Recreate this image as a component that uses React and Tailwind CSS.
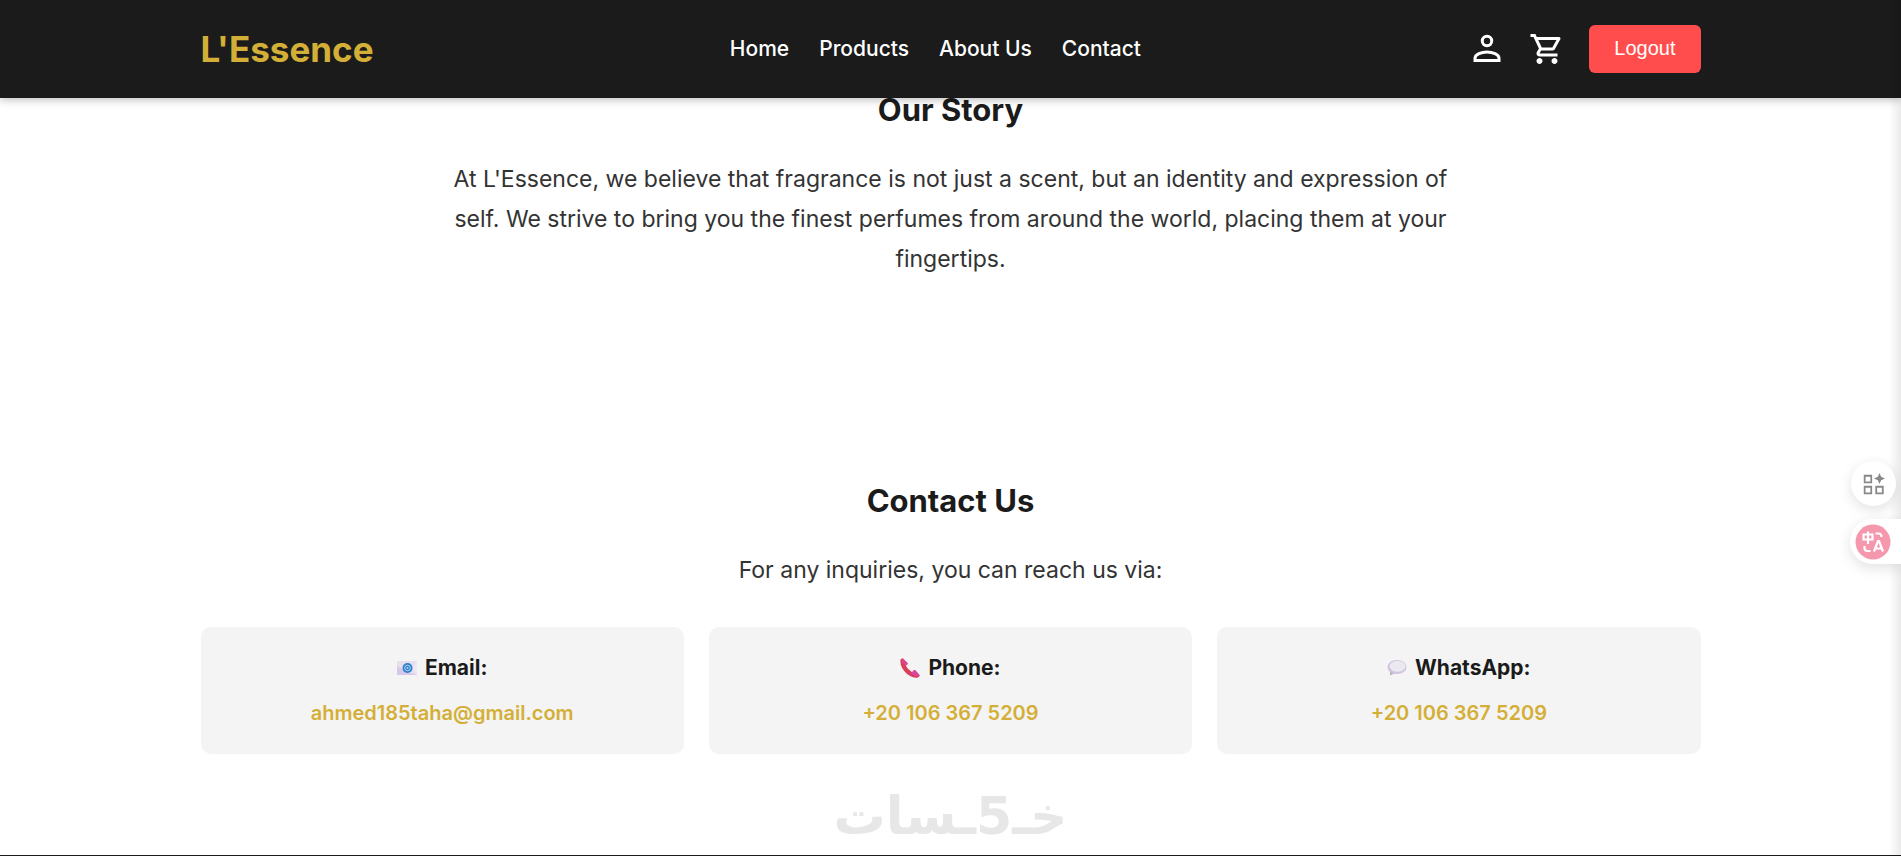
import React from 'react';
import { MdOutlineShoppingCart } from 'react-icons/md';

const navLinks = [
  { label: 'Home', href: '#home' },
  { label: 'Products', href: '#products' },
  { label: 'About Us', href: '#about' },
  { label: 'Contact', href: '#contact' },
];

function PersonIcon() {
  return (
    <svg viewBox="0 0 36 36" className="size-9" fill="none" stroke="currentColor" strokeWidth="3">
      <circle cx="18" cy="10" r="4.700" />
      <path d="M6 29.500v-2.200c0-3.800 6.500-6.300 12-6.300s12 2.500 12 6.300v2.200z" />
    </svg>
  );
}

function EmailEmoji() {
  return (
    <svg viewBox="0 0 20 20" className="size-5" aria-hidden="true">
      <path d="M0 3h20v14H0z" fill="#e6e0ee" />
      <path d="M0 17V8l8 5 12 4z" fill="#d5c8e8" />
      <path d="M20 3v12l-5-4z" fill="#eeeaf3" />
      <circle cx="10.500" cy="10" r="5" fill="#2f7fcb" />
      <circle cx="10.500" cy="10" r="2.800" fill="none" stroke="#b5d7f5" strokeWidth="1" />
      <circle cx="10.500" cy="10" r="1" fill="#b5d7f5" />
    </svg>
  );
}

function PhoneEmoji() {
  return (
    <svg viewBox="0 0 20 20" className="size-5" aria-hidden="true">
      <path d="M0.500 1.500Q1.500 0 3 0.500L7.500 5Q8 6 6.500 7L5.800 7.800Q8 12 12.200 14.200L13.500 12.500Q14.500 11.500 15.500 12.500L19.500 17Q20 18.500 18 19.500Q13 20.500 7 16Q-0.500 9 0.500 1.500Z" fill="#dc3d5b" />
      <path d="M3 0.500L7.500 5Q8 6 6.500 7L5.800 7.800L1.500 3.500Z" fill="#d8489a" />
      <path d="M12.200 14.200L13.500 12.500Q14.500 11.500 15.500 12.500L19.500 17Q20 18 18.500 18.500Q14 18 10.500 15.500Z" fill="#d8489a" />
    </svg>
  );
}

function ChatEmoji() {
  return (
    <svg viewBox="0 0 20 20" className="size-5" aria-hidden="true">
      <path d="M3 12v5.500l6-3z" fill="#b9b1c2" />
      <ellipse cx="10" cy="9" rx="9.500" ry="7" fill="#cfc2e2" />
      <ellipse cx="10.500" cy="8.300" rx="8" ry="5.500" fill="#ebe8ef" />
    </svg>
  );
}

const contacts = [
  { icon: <EmailEmoji />, label: 'Email:', value: 'ahmed185taha@gmail.com', href: 'mailto:ahmed185taha@gmail.com' },
  { icon: <PhoneEmoji />, label: 'Phone:', value: '+20 106 367 5209', href: 'tel:+201063675209' },
  { icon: <ChatEmoji />, label: 'WhatsApp:', value: '+20 106 367 5209', href: 'https://wa.me/201063675209' },
];

function Header() {
  return (
    <header className="sticky top-0 z-10 bg-[#1b1b1b] shadow-[0_2px_8px_rgba(0,0,0,0.25)]">
      <div className="mx-auto flex max-w-[1500px] items-center justify-between py-[25px]">
        <a href="#home" className="text-[35px] leading-10 font-bold text-[#d4af37]">L'Essence</a>
        <nav className="flex gap-[30px] pl-7 text-[21px] font-medium text-white">
          {navLinks.map((link) => (
            <a key={link.label} href={link.href}>{link.label}</a>
          ))}
        </nav>
        <div className="flex items-center gap-6 text-white">
          <a href="#profile" aria-label="Profile"><PersonIcon /></a>
          <a href="#cart" aria-label="Cart"><MdOutlineShoppingCart className="size-9" /></a>
          <button className="h-12 rounded-md bg-[#ff4d4d] px-[25px] pb-[2px] font-['Liberation_Sans',sans-serif] text-xl">
            Logout
          </button>
        </div>
      </div>
    </header>
  );
}

function FloatingTools() {
  return (
    <div className="fixed right-0 top-[461px] z-20 flex flex-col items-end gap-[13px]">
      <button aria-label="Tools" className="mr-[5px] flex size-[45px] items-center justify-center rounded-full bg-white shadow-[0_4px_14px_rgba(0,0,0,0.12)]">
        <svg viewBox="0 0 20 20" className="size-[22px]" fill="none" stroke="#888888" strokeWidth="1.600">
          <path d="M1.500 2.500h6v6h-6zM1.500 12.500h6v6h-6zM12 12.500h6v6h-6z" />
          <path d="M15 0l1.500 3.500L20 5l-3.500 1.500L15 10l-1.500-3.500L10 5l3.500-1.500z" fill="#888888" stroke="none" />
        </svg>
      </button>
      <button aria-label="Translate" className="flex h-[45px] w-[51px] items-center rounded-l-full bg-white pl-[5px] shadow-[0_4px_14px_rgba(0,0,0,0.12)]">
        <svg viewBox="0 0 36 36" className="size-9">
          <circle cx="18" cy="18" r="17.500" fill="#f598ae" />
          <g fill="none" stroke="#ffffff" strokeWidth="2.200">
            <path d="M8.500 10.500h9v5h-9zM13 7.500v12.500M20.500 9.500h3q3 0 3 3.500M9.500 22v2q0 3 3 3h3" />
            <path d="M19 27.500l4-10.500h1l4 10.500M20.500 24.500h6" />
          </g>
        </svg>
      </button>
    </div>
  );
}

function App() {
  return (
    <div className="flex min-h-screen flex-col bg-white font-[Inter,sans-serif] text-[#1b1b1b]">
      <Header />
      <main className="mx-auto w-full max-w-[1500px] text-center">
        <section id="about" className="pb-[210px]">
          <h2 className="text-[31px] leading-6 font-bold">Our Story</h2>
          <p className="mx-auto mt-[37px] max-w-[1000px] text-[23px] leading-10 text-[#333333]">
            At L'Essence, we believe that fragrance is not just a scent, but an identity and expression of
            self. We strive to bring you the finest perfumes from around the world, placing them at your
            fingertips.
          </p>
        </section>
        <section id="contact">
          <h2 className="text-[31px] leading-6 font-bold">Contact Us</h2>
          <p className="mt-[37px] text-[23px] leading-10 text-[#333333]">For any inquiries, you can reach us via:</p>
          <div className="mt-[37px] grid grid-cols-3 gap-[25px]">
            {contacts.map((item) => (
              <div key={item.label} className="rounded-[10px] bg-[#f4f4f4] pt-5 pb-4 text-xl">
                <h3 className="flex items-center justify-center gap-2 text-[21px] leading-[42px] font-bold">
                  {item.icon}
                  {item.label}
                </h3>
                <a href={item.href} className="block leading-[49px] font-semibold text-[#d4af37]">{item.value}</a>
              </div>
            ))}
          </div>
        </section>
        <p dir="rtl" lang="ar" className="mt-8 text-[52px] leading-[60px] font-bold text-[#e7e7e7] font-['DejaVu_Sans',sans-serif]">
          خـ5ـسات
        </p>
      </main>
      <footer className="mt-auto h-px bg-[#1b1b1b]" />
      <div className="pointer-events-none fixed inset-y-0 right-0 z-10 w-3 bg-linear-to-l from-black/8 to-transparent" />
      <FloatingTools />
    </div>
  );
}

export default App;
